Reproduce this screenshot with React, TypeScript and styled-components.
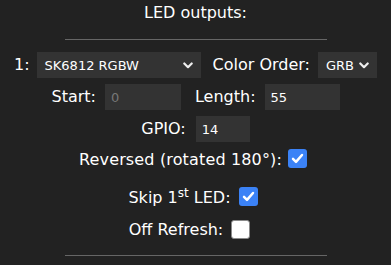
import React from "react";
import styled, { createGlobalStyle } from "styled-components";

const Global = createGlobalStyle`
  html, body {
    margin: 0;
    padding: 0;
    background: #222;
  }
  body {
    color: #fff;
    font-family: "DejaVu Sans", Verdana, sans-serif;
    font-size: 16px;
  }
`;

const Page = styled.div`
  width: 391px;
  height: 265px;
  display: flex;
  flex-direction: column;
  align-items: center;
  overflow: hidden;
`;

const Title = styled.div`
  height: 26px;
  line-height: 26px;
  text-align: center;
`;

const Rule = styled.div<{ $top: number }>`
  width: 262px;
  height: 1px;
  background: #666;
  margin-top: ${(p) => p.$top}px;
`;

const Row = styled.div<{ $top: number; $h?: number }>`
  display: flex;
  align-items: center;
  justify-content: center;
  height: ${(p) => p.$h ?? 26}px;
  margin-top: ${(p) => p.$top}px;
  white-space: nowrap;
`;

const Label = styled.span<{ $gap?: number; $drop?: number; $track?: number }>`
  line-height: 20px;
  margin-right: ${(p) => p.$gap ?? 8}px;
  padding-top: ${(p) => p.$drop ?? 0}px;
  letter-spacing: ${(p) => p.$track ?? 0}px;
`;

const Select = styled.div<{ $w: number; $gap?: number }>`
  width: ${(p) => p.$w}px;
  height: 26px;
  box-sizing: border-box;
  background: #333;
  display: flex;
  align-items: center;
  justify-content: space-between;
  padding: 0 8px 0 8px;
  font-size: 13px;
  margin-right: ${(p) => p.$gap ?? 0}px;
  svg {
    flex: none;
  }
`;

const Field = styled.div<{ $w: number; $dim?: boolean; $gap?: number }>`
  width: ${(p) => p.$w}px;
  height: 26px;
  box-sizing: border-box;
  background: #333;
  display: flex;
  align-items: center;
  padding-left: 6px;
  font-size: 13px;
  color: ${(p) => (p.$dim ? "#777" : "#fff")};
  margin-right: ${(p) => p.$gap ?? 0}px;
`;

const Box = styled.span<{ $on?: boolean; $after?: number }>`
  width: 19px;
  height: 19px;
  box-sizing: border-box;
  border-radius: 3px;
  display: flex;
  align-items: center;
  justify-content: center;
  background: ${(p) => (p.$on ? "#3b82f6" : "#fff")};
  border: ${(p) => (p.$on ? "none" : "1.5px solid #8a8a8a")};
  margin-right: ${(p) => p.$after ?? 0}px;
`;

const Sup = styled.sup`
  font-size: 12px;
  vertical-align: 6px;
  line-height: 0;
`;

function Chevron() {
  return (
    <svg width="10" height="7" viewBox="0 0 10 7">
      <polyline
        points="1.3,1.5 5,5.2 8.7,1.5"
        fill="none"
        stroke="#eee"
        strokeWidth="2.2"
        strokeLinecap="round"
        strokeLinejoin="round"
      />
    </svg>
  );
}

function Check({ on, after }: { on?: boolean; after?: number }) {
  return (
    <Box $on={on} $after={after}>
      {on && (
        <svg width="13" height="11" viewBox="0 0 13 11">
          <polyline
            points="2,5.8 5,8.8 11,2"
            fill="none"
            stroke="#fff"
            strokeWidth="2.5"
            strokeLinecap="round"
            strokeLinejoin="round"
          />
        </svg>
      )}
    </Box>
  );
}

export default function App() {
  return (
    <>
      <Global />
      <Page>
        <Title>LED outputs:</Title>
        <Rule $top={13} />
        <Row $top={12}>
          <Label $gap={7}>1:</Label>
          <Select $w={164} $gap={12}>
            <span>SK6812 RGBW</span>
            <Chevron />
          </Select>
          <Label $gap={8}>Color Order:</Label>
          <Select $w={59}>
            <span>GRB</span>
            <Chevron />
          </Select>
        </Row>
        <Row $top={6}>
          <Label $gap={9}>Start:</Label>
          <Field $w={76} $dim $gap={14}>0</Field>
          <Label $gap={9}>Length:</Label>
          <Field $w={75}>55</Field>
        </Row>
        <Row $top={6}>
          <Label $gap={10}>GPIO:</Label>
          <Field $w={54}>14</Field>
        </Row>
        <Row $top={7} $h={19}>
          <Label $gap={6} $drop={2} $track={0.15}>
            Reversed (rotated 180°):
          </Label>
          <Check on after={5} />
        </Row>
        <Row $top={19} $h={19}>
          <Label $gap={8} $drop={2}>
            Skip 1<Sup>st</Sup> LED:
          </Label>
          <Check on after={5} />
        </Row>
        <Row $top={14} $h={19}>
          <Label $gap={8}>Off Refresh:</Label>
          <Check after={12} />
        </Row>
        <Rule $top={16} />
      </Page>
    </>
  );
}
